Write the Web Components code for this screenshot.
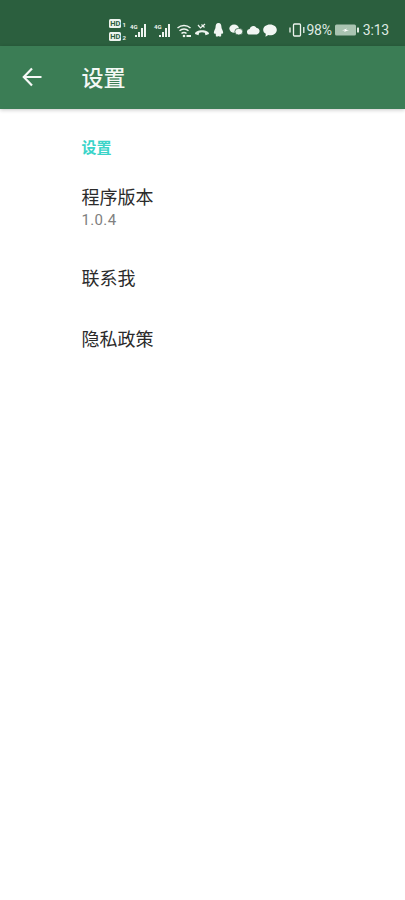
<!DOCTYPE html>
<html lang="zh"><head><meta charset="utf-8"><title>设置</title>
<style>
html,body{margin:0;padding:0;background:#fff;height:100%}
body{font-family:Roboto,"Noto Sans CJK SC",sans-serif}
</style></head><body>
<app-statusbar></app-statusbar>
<app-toolbar title="设置"></app-toolbar>
<settings-list>
  <settings-category>设置</settings-category>
  <settings-item title="程序版本" summary="1.0.4"></settings-item>
  <settings-item title="联系我"></settings-item>
  <settings-item title="隐私政策"></settings-item>
</settings-list>
<script>
const signal=`<svg width="20" height="15" viewBox="0 0 20 15"><text x="1" y="5.500" font-size="6" font-weight="700" fill="#eef4ef" font-family="Roboto">4G</text><g fill="#eef4ef"><rect x="6" y="12" width="2" height="2"/><rect x="9" y="9" width="2" height="5"/><rect x="12" y="5" width="2" height="9"/><rect x="15" y="1" width="2" height="13"/></g></svg>`;
const hd=n=>`<span class="hd"><b>HD</b><i>${n}</i></span>`;
class AppStatusbar extends HTMLElement{constructor(){super();this.attachShadow({mode:'open'}).innerHTML=`<style>
:host{display:flex;height:46px;background:#2b5f3e;color:#eaf2ec;align-items:center;justify-content:flex-end;box-sizing:border-box;padding:14px 16px 0 0;font-family:Roboto,sans-serif}
.hds{display:flex;flex-direction:column;gap:4px;margin-right:3px;width:17px}
.hd{display:flex;align-items:flex-end;gap:1px;height:9px}
.hd b{font-size:7.500px;line-height:9px;width:12px;text-align:center;background:#eef4ef;color:#2b5f3e;border-radius:1.500px;font-weight:700}
.hd i{font-style:normal;font-size:6px;line-height:6px;width:4px;font-weight:700}
.g{display:flex;align-items:center}
svg{display:block;flex:none}
.t{font-size:14px;line-height:16px;color:#dfeae2;letter-spacing:-.2px}
</style>
<div class="hds">${hd(1)}${hd(2)}</div>
<div class="g" style="gap:4px">${signal}${signal}
<svg width="14" height="15" viewBox="0 0 14 15" fill="none" stroke="#eef4ef" stroke-width="1.500"><path d="M.500 5a10 10 0 0 1 13 0M2.500 7.800a6.800 6.800 0 0 1 9 0M4.500 10.500a3.500 3.500 0 0 1 5 0"/><circle cx="7" cy="13" r="1.300" fill="#eef4ef" stroke="none"/><rect x="9.500" y="12" width="4.500" height="2" fill="#eef4ef" stroke="none"/></svg>
<svg width="14" height="14" viewBox="0 0 14 14" fill="none" stroke="#eef4ef" stroke-width="1.200"><path d="M3 2l2.500 3L10 1M6.500 1.500l3 3"/><path d="M0 11c0-5 14-5 14 0l-3.500 1.200-.7-2.400c-2-.7-3.600-.7-5.600 0l-.7 2.400z" fill="#eef4ef" stroke="none"/></svg>
<svg width="11" height="14" viewBox="0 0 13 15" preserveAspectRatio="none" fill="#f2f6f3"><path d="M6.500 0C3.800 0 3 2.300 3 4.500 3 6 1 8 1 10.500c0 1 .7 1.200 1.500.500.300 1 .800 1.500 1.200 1.800C2.800 13.300 3 14.500 5 14.500c1 0 1.300-.300 1.500-.500.200.2.500.5 1.500.5 2 0 2.200-1.200 1.300-1.700.400-.300.900-.800 1.200-1.800.800.700 1.500.500 1.500-.5C12 8 10 6 10 4.500 10 2.300 9.200 0 6.500 0z"/></svg>
<svg width="14" height="12" viewBox="0 0 15 13" fill="#f2f6f3" style="margin-left:1px"><ellipse cx="5.500" cy="5" rx="5.200" ry="4.500"/><ellipse cx="10.500" cy="8.300" rx="4.300" ry="3.600" stroke="#2b5f3e" stroke-width=".8"/></svg>
<svg width="13" height="10" viewBox="0 0 13 10" fill="#f2f6f3"><path d="M3 9.500a2.800 2.800 0 0 1-.4-5.600A3.800 3.800 0 0 1 9.700 3a3.300 3.300 0 0 1 .3 6.500z"/></svg>
<svg style="margin-left:-1px" width="14" height="13" viewBox="0 0 14 13" fill="#f2f6f3"><path d="M7 .5c3.800 0 6.800 2.400 6.800 5.400S10.800 11.300 7 11.300c-.6 0-1.200 0-1.700-.2L2.500 12.800l.3-3C1.100 8.800.2 7.400.2 5.900.2 2.900 3.200.5 7 .5z"/></svg></div>
<svg style="margin-left:12px" width="16" height="14" viewBox="0 0 16 14" fill="none" stroke="#eef4ef" stroke-width="1.300"><rect x="4.500" y="1" width="7" height="12" rx="1"/><path d="M1 4.500v5M14.800 4v6"/></svg>
<span class="t" style="margin-left:1px">98%</span>
<svg style="margin-left:3px" width="24" height="12" viewBox="0 0 24 12"><rect x="0" y="0.500" width="21" height="11" rx="1.500" fill="#a9c4b1"/><rect x="22" y="3.500" width="2" height="5" rx=".5" fill="#dfeae2"/><path d="M7 6.500l5-2-1 1.500h3l-5 2 1-1.500z" fill="#fff"/></svg>
<span class="t" style="margin-left:4px">3:13</span>`}}
class AppToolbar extends HTMLElement{connectedCallback(){if(this.shadowRoot)return;this.attachShadow({mode:'open'}).innerHTML=`<style>
:host{display:flex;align-items:center;height:63px;background:#3b7d55;color:#f4f8f5;box-shadow:0 1px 4px rgba(0,0,0,.22);position:relative}
button{all:unset;width:81.500px;height:63px;display:flex;align-items:center;padding-left:22px;box-sizing:border-box}
h1{margin:-4px 0 0;font:500 22px/1 "Noto Sans CJK SC",sans-serif}
</style><button aria-label="返回"><svg style="display:block;margin-top:-1px" width="20" height="20" viewBox="0 0 20 20" fill="none" stroke="#f6f9f7" stroke-width="2.200"><path d="M19.500 10H2M10 1.500L1.800 10l8.200 8.500"/></svg></button><h1>${this.getAttribute('title')}</h1>`}}
class SettingsList extends HTMLElement{constructor(){super();this.attachShadow({mode:'open'}).innerHTML=`<style>:host{display:flex;flex-direction:column;padding:28px 0 0 81.500px}</style><slot></slot>`}}
class SettingsCategory extends HTMLElement{constructor(){super();this.attachShadow({mode:'open'}).innerHTML=`<style>:host{display:block;font:700 15px/20px "Noto Sans CJK SC",sans-serif;color:#3ad4c9;height:20px;margin-bottom:27px}</style><slot></slot>`}}
class SettingsItem extends HTMLElement{connectedCallback(){if(this.shadowRoot)return;const s=this.getAttribute('summary');this.attachShadow({mode:'open'}).innerHTML=`<style>
:host{display:block;margin-bottom:37px}
:host([summary]){margin-bottom:34px}
.t{font:400 18px/24px "Noto Sans CJK SC",sans-serif;color:#2b2b2b}
.s{font:400 15px/22px Roboto,sans-serif;color:#808080;letter-spacing:.35px;margin-top:1px}
</style><div class="t">${this.getAttribute('title')}</div>${s?`<div class="s">${s}</div>`:''}`}}
customElements.define('app-statusbar',AppStatusbar);customElements.define('app-toolbar',AppToolbar);customElements.define('settings-list',SettingsList);customElements.define('settings-category',SettingsCategory);customElements.define('settings-item',SettingsItem);
</script></body></html>
